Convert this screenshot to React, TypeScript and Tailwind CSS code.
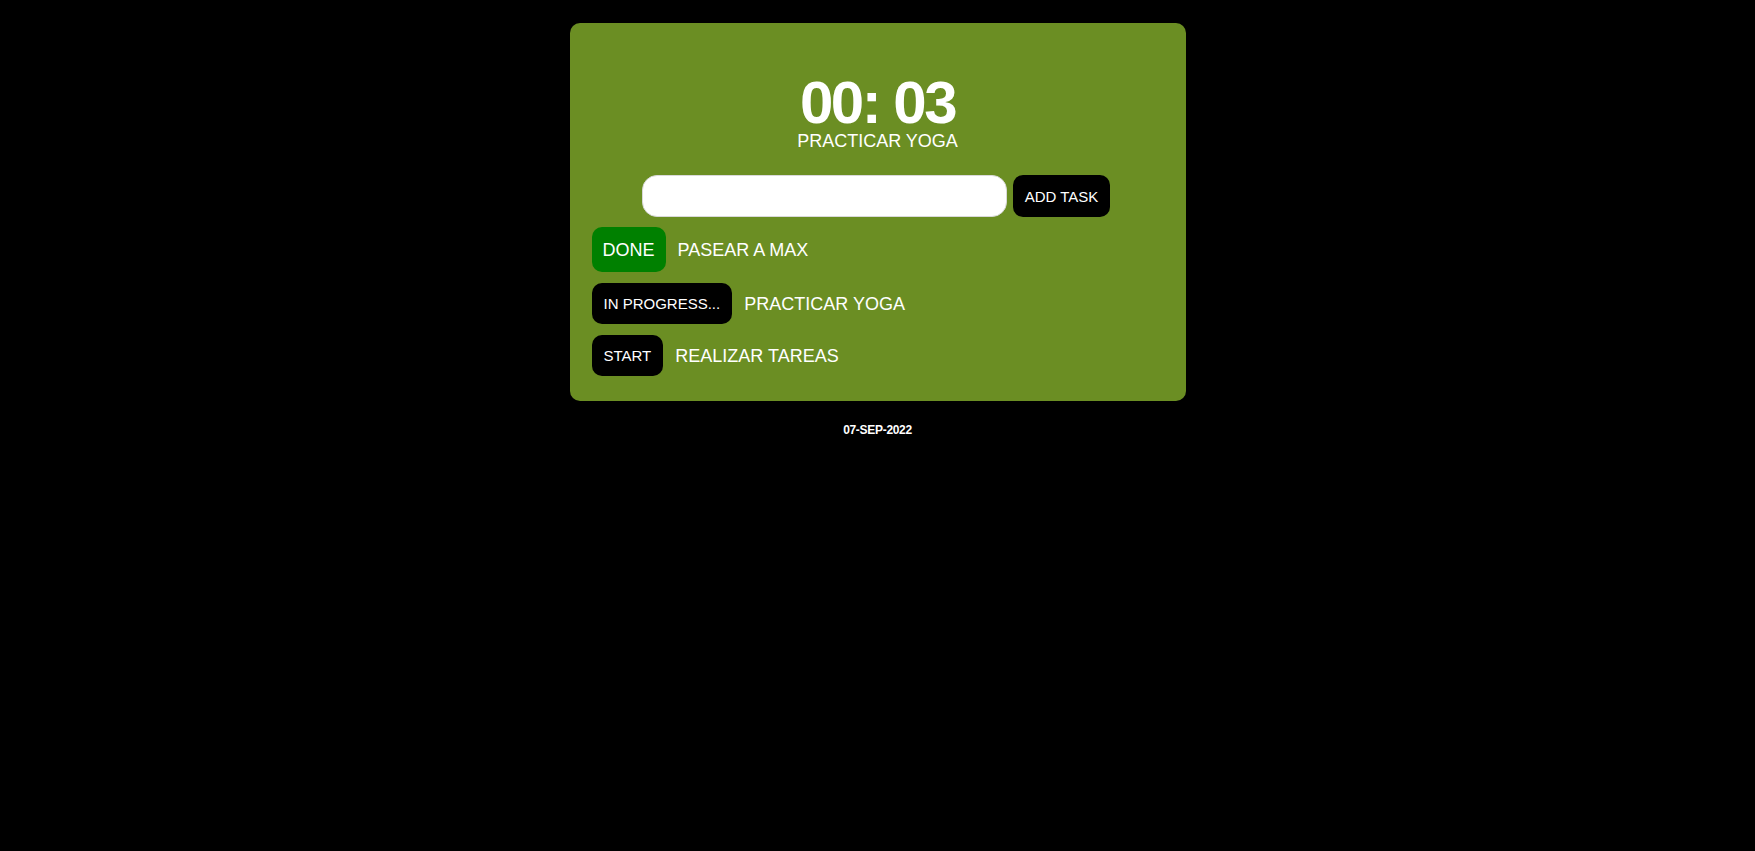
import React from 'react';

type Status = 'done' | 'progress' | 'start';

interface Task {
  id: number;
  name: string;
  status: Status;
}

const tasks: Task[] = [
  { id: 1, name: 'PASEAR A MAX', status: 'done' },
  { id: 2, name: 'PRACTICAR YOGA', status: 'progress' },
  { id: 3, name: 'REALIZAR TAREAS', status: 'start' },
];

const StatusButton = ({ status }: { status: Status }) => {
  if (status === 'done') {
    return (
      <button className="h-[45px] rounded-[10px] bg-[#008000] px-[11px] text-[18px] leading-none text-white">
        DONE
      </button>
    );
  }
  return (
    <button className="h-[41px] rounded-[10px] bg-black px-[12px] text-[15px] leading-none text-white">
      {status === 'progress' ? 'IN PROGRESS...' : 'START'}
    </button>
  );
};

export default function App() {
  return (
    <div
      className="min-h-screen bg-black pt-[23px] text-white"
      style={{ fontFamily: '"Liberation Sans", Arial, sans-serif' }}
    >
      <div className="mx-auto w-[616px] rounded-[10px] bg-[#6b8e23] px-[22px] pt-[52px] pb-[25px]">
        <div className="text-center text-[60px] font-bold leading-[56px] tracking-[-2.5px]">00: 03</div>
        <div className="mt-[1px] text-center text-[18px] leading-[18px]">PRACTICAR YOGA</div>

        <div className="mt-[25px] flex justify-center gap-[6px] pr-[3px]">
          <input
            type="text"
            className="h-[42px] w-[365px] rounded-[15px] border border-[#d9d9d9] bg-white px-3 text-black outline-none"
          />
          <button className="h-[42px] w-[97px] rounded-[10px] bg-black text-[15px] leading-none text-white">
            ADD TASK
          </button>
        </div>

        <div className="mt-[10px] flex flex-col gap-[11px]">
          {tasks.map((task) => (
            <div key={task.id} className="flex items-center">
              <StatusButton status={task.status} />
              <span className="ml-[12px] text-[18px] leading-none">{task.name}</span>
            </div>
          ))}
        </div>
      </div>

      <div className="mt-[23px] text-center text-[12px] font-bold leading-none tracking-[-0.3px]">07-SEP-2022</div>
    </div>
  );
}
